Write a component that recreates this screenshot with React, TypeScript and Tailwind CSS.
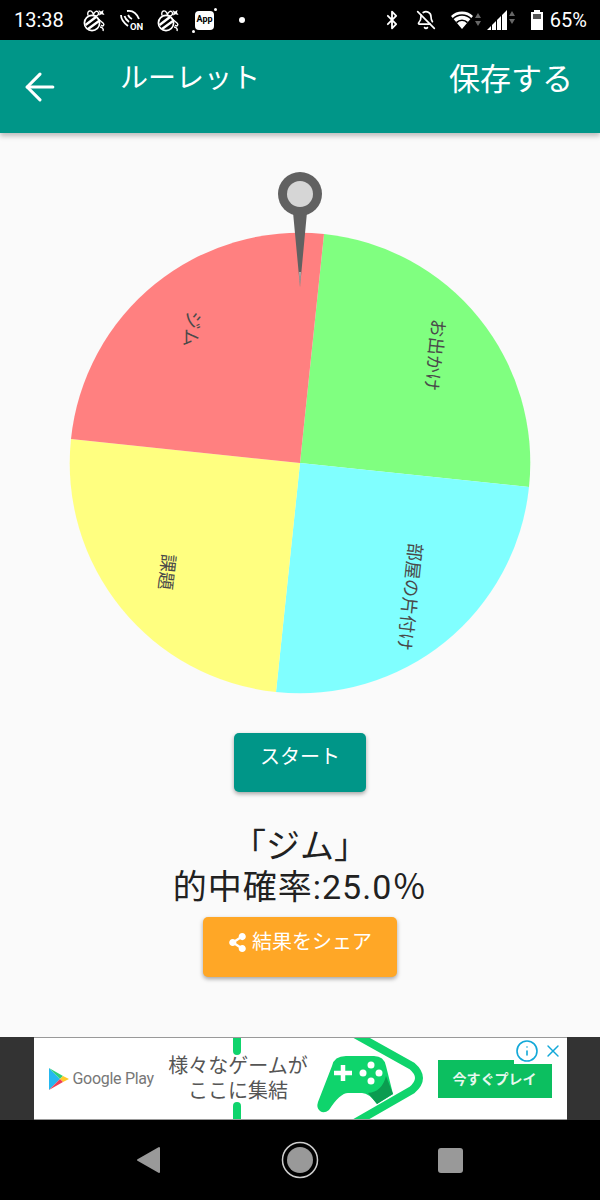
import { ArrowLeft, Bluetooth, BellOff, Info, X } from "lucide-react"
import { FaShareAlt } from "react-icons/fa"

// Wheel slices, in page coordinates (centre 300,463, radius 230)
const slices = [
  { d: "M300 463 L324 234 A230 230 0 0 1 529 487 Z", color: "#80ff80" },
  { d: "M300 463 L529 487 A230 230 0 0 1 276 692 Z", color: "#80ffff" },
  { d: "M300 463 L276 692 A230 230 0 0 1 71 439 Z", color: "#ffff80" },
  { d: "M300 463 L71 439 A230 230 0 0 1 324 234 Z", color: "#ff8080" },
]

const labels = [
  { text: "ジム", x: 192, y: 329 },
  { text: "お出かけ", x: 435, y: 355 },
  { text: "部屋の片付け", x: 410, y: 597 },
  { text: "課題", x: 167, y: 572 },
]

function GiftBall() {
  return (
    <svg width="23" height="23" viewBox="0 0 23 23" fill="none" stroke="white" strokeWidth="1.7">
      <circle cx="9" cy="14" r="7.6" />
      <path d="M2.5 16 L13 8 M5 20 L16 12" strokeWidth="2.4" />
      <path d="M5 6.5 C3.5 1 9 0 10.5 6 C11 2 15 1 15.5 4 C15.8 6 14 7 12 7" strokeWidth="1.4" />
      <path d="M14 9 L20 14 C22 16 20 18 18 16 M17 18 C19 18 21 20 20 22" strokeWidth="1.4" />
      <path d="M15.5 1 L18 2.5 L20.5 1 L20 3.5 L21.5 6 L18.5 5.2 L16 6.5 L16.5 3.5 Z" fill="white" stroke="none" />
    </svg>
  )
}

function StatusBar() {
  return (
    <div className="h-10 bg-black flex items-center text-white text-[20px] shrink-0">
      <span className="ml-[14px] w-[50px]">13:38</span>
      <div className="ml-[19px] flex items-center">
        <GiftBall />
        <svg width="23" height="22" viewBox="0 0 23 22" fill="none" stroke="white" strokeWidth="1.8" className="ml-[14px]">
          <path d="M1 6 C1 10 4 14 8 17 M4.5 7 C5 9 6.5 11 9 13 M8 6 C9 8 10 9 12 10 M7 2 C13 1 17 5 19 10" />
          <text x="10" y="21" fontSize="9.5" fill="white" stroke="none" fontWeight="700">ON</text>
        </svg>
        <div className="ml-[14px]">
          <GiftBall />
        </div>
        <div className="relative w-[19px] h-[19px] ml-[15px] rounded-[4px] bg-white text-black text-[9px] font-bold flex items-center justify-center">
          App
          <span className="absolute -right-[3px] -top-[3px] w-[3px] h-[3px] rounded-full bg-white" />
          <span className="absolute -left-[3px] -bottom-[3px] w-[3px] h-[3px] rounded-full bg-white" />
        </div>
      </div>
      <span className="ml-[25px] w-[6px] h-[6px] rounded-full bg-white" />
      <div className="ml-auto mr-[13px] flex items-center">
        <Bluetooth size={20} strokeWidth={2.2} />
        <BellOff size={20} strokeWidth={2} className="ml-[14px]" />
        <svg width="32" height="20" viewBox="0 0 32 20" className="ml-[15px]">
          <path d="M0 6 A16 16 0 0 1 22 6 L11 19 Z" fill="white" />
          <path d="M2 8.8 A12.5 12.5 0 0 1 20 8.8 M5.5 12.6 A7.5 7.5 0 0 1 16.5 12.6" fill="none" stroke="black" strokeWidth="1.6" />
          <path d="M24 8 L27 3 L30 8 Z M24 11 L30 11 L27 16 Z" fill="#666666" />
        </svg>
        <svg width="30" height="22" viewBox="0 0 30 22" className="ml-[3px]">
          <path d="M1 21 L5 21 L5 17 Z M6 21 L10 21 L10 12 L6 16 Z M11 21 L15 21 L15 7 L11 11 Z M16 21 L21 21 L21 1 L16 6 Z" fill="white" />
          <path d="M23 7 L26 2 L29 7 Z M23 10 L29 10 L26 15 Z" fill="#666666" />
        </svg>
        <svg width="14" height="22" viewBox="0 0 14 22" className="ml-[14px]">
          <path d="M4 1 H10 V3 H13 V21 H1 V3 H4 Z" fill="white" />
          <path d="M3 5 H11 V10 H3 Z" fill="#555555" />
        </svg>
        <span className="ml-[6px]">65%</span>
      </div>
    </div>
  )
}

function Wheel() {
  return (
    <svg width="464" height="524" viewBox="68 172 464 524">
      {slices.map((s) => (
        <path key={s.color} d={s.d} fill={s.color} />
      ))}
      {labels.map((l) => (
        <text
          key={l.text}
          x={l.x}
          y={l.y}
          transform={`rotate(96 ${l.x} ${l.y})`}
          textAnchor="middle"
          dominantBaseline="central"
          fontSize="18"
          fill="#4a4a4a"
        >
          {l.text}
        </text>
      ))}
      {/* pointer */}
      <path d="M293 212 L307 212 L300 287 Z" fill="#616161" />
      <path d="M299.4 272 L300.6 272 L300 287 Z" fill="#dddddd" />
      <circle cx="300" cy="194" r="22" fill="#616161" />
      <circle cx="300" cy="194" r="13" fill="#d6d6d6" />
    </svg>
  )
}

function AdBanner() {
  return (
    <div className="h-[83px] bg-[#333333] flex justify-center shrink-0">
      <div className="relative w-[533px] bg-white border-y border-[#999999] flex items-center overflow-hidden">
        {/* green play outline and controller behind the content */}
        <svg width="533" height="81" viewBox="0 0 533 81" className="absolute left-0 top-0">
          <path d="M203 -2 L203 13 M203 68 L203 83" stroke="#0fd46c" strokeWidth="8" strokeLinecap="round" fill="none" />
          <path d="M317 -6 L378 28 Q392 40 378 52 L317 87" stroke="#0fd46c" strokeWidth="8" fill="none" />
          <path d="M298 28 Q300 18 312 18 L340 18 Q350 18 352 28 L359 56 L343 66 Q335 55 328 55 L314 55 Q306 55 295 72 Q290 76 286 73 Q282 70 284 64 Z" fill="#0fd46c" />
          <path d="M352 38 L359 56 L343 66 L334 55 Q348 54 352 38 Z" fill="#0b9c50" />
          <path d="M309 27 L309 43 M300 35 L318 35" stroke="white" strokeWidth="4.5" />
          <circle cx="337" cy="27" r="3.5" fill="white" />
          <circle cx="337" cy="43" r="3.5" fill="white" />
          <circle cx="329" cy="35" r="3.5" fill="white" />
          <circle cx="345" cy="35" r="3.5" fill="white" />
        </svg>
        <svg width="20" height="22" viewBox="0 0 20 22" className="relative ml-[15px]">
          <path d="M0 0 L11 11 L0 22 Z" fill="#25b8f0" />
          <path d="M0 0 L14 8 L11 11 Z" fill="#30d07a" />
          <path d="M14 8 L20 11 L14 14 L11 11 Z" fill="#ffc928" />
          <path d="M0 22 L14 14 L11 11 Z" fill="#ef4056" />
        </svg>
        <span className="relative ml-[4px] w-[82px] whitespace-nowrap text-[#777777] text-[16px] tracking-[-0.3px]">
          Google Play
        </span>
        <div className="relative ml-[11px] w-[145px] text-center text-[#555555] text-[20px] leading-[25px]">
          様々なゲームが
          <br />
          ここに集結
        </div>
        <div className="absolute left-[404px] top-[22px] w-[114px] h-[38px] bg-[#0cbf60] text-[#e6f8ee] text-[14px] font-bold flex items-center justify-center">
          今すぐプレイ
        </div>
        <div className="absolute right-0 top-0 h-[26px] w-[53px] bg-white flex items-center pl-[1px] gap-[4px] text-[#12a8d8]">
          <Info size={24} strokeWidth={1.6} />
          <X size={20} strokeWidth={1.7} />
        </div>
      </div>
    </div>
  )
}

function NavBar() {
  return (
    <div className="h-20 bg-black flex items-center shrink-0">
      <svg width="24" height="28" viewBox="0 0 24 28" className="ml-[136px]">
        <path d="M23 2 L23 26 L2 14 Z" fill="#999999" stroke="#999999" strokeWidth="2" strokeLinejoin="round" />
      </svg>
      <svg width="38" height="38" viewBox="0 0 38 38" className="ml-[121px]">
        <circle cx="19" cy="19" r="17.5" fill="none" stroke="#cccccc" strokeWidth="1.5" />
        <circle cx="19" cy="19" r="13" fill="#999999" />
      </svg>
      <div className="ml-[119px] w-[25px] h-[25px] rounded-[3px] bg-[#999999]" />
    </div>
  )
}

export default function App() {
  return (
    <div className="w-[600px] h-[1200px] flex flex-col bg-[#fafafa] font-['Roboto','Noto_Sans_CJK_JP',sans-serif] overflow-hidden">
      <StatusBar />

      <header className="relative z-10 h-[93px] bg-[#009688] text-white shadow-[0_3px_5px_rgba(0,0,0,0.25)] flex items-start shrink-0">
        <ArrowLeft size={44} strokeWidth={1.7} className="ml-[18px] mt-[25px]" />
        <h1 className="ml-[58px] mt-[19px] text-[28px] leading-10">ルーレット</h1>
        <button className="ml-auto mr-[27px] mt-[20px] text-[31px] leading-10">保存する</button>
      </header>

      <main className="flex-1 flex flex-col items-center pt-[39px]">
        <Wheel />
        <button className="mt-[37px] w-[132px] h-[59px] pb-[12px] rounded-[5px] bg-[#009688] text-white text-[20px] shadow-[0_2px_4px_rgba(0,0,0,0.35)]">
          スタート
        </button>
        <p className="mt-[34px] text-[34px] leading-[41px] text-[#212121] text-center">
          「ジム」
          <br />
          <span className="tracking-[1px]">的中確率:25.0％</span>
        </p>
        <button className="mt-[9px] w-[194px] h-[60px] pb-[10px] rounded-[5px] bg-[#ffa726] text-white text-[20px] shadow-[0_2px_4px_rgba(0,0,0,0.35)] flex items-center justify-center gap-[5px]">
          <FaShareAlt size={19} />
          結果をシェア
        </button>
      </main>

      <AdBanner />
      <NavBar />
    </div>
  )
}
